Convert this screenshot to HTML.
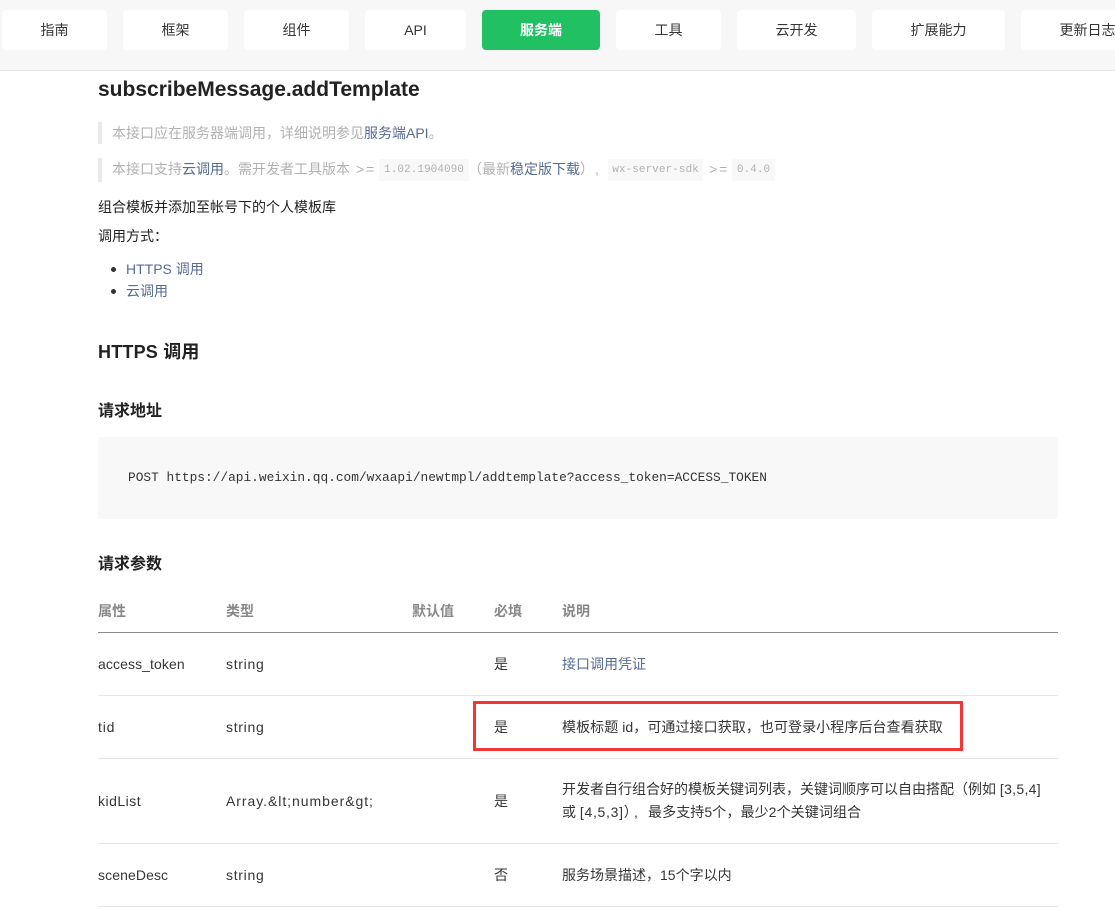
<!DOCTYPE html>
<html lang="zh-CN">
<head>
<meta charset="utf-8">
<title>subscribeMessage.addTemplate</title>
<style>
html,body{margin:0;padding:0;background:#fff}
body{width:1115px;height:910px;overflow:hidden;position:relative;font-family:"Liberation Sans","Noto Sans CJK SC",sans-serif;font-size:14px;color:#353535}
.a{position:absolute;white-space:nowrap;line-height:20px}
.bar{position:absolute;left:0;top:0;width:1115px;height:70px;background:#f7f7f7;border-bottom:1px solid #e7e7e7}
.tab{position:absolute;top:10px;height:40px;line-height:40px;background:#fff;border-radius:4px;text-align:center;color:#353535;font-size:14px;white-space:nowrap}
.tab.on{background:#20c063;color:#fff;font-weight:bold}
.q{position:absolute;left:98px;width:4px;background:#e9e9e9}
.g{color:#b2b2b2}
.l{color:#576b95}
.c{position:absolute;top:159px;height:22px;line-height:22px;box-sizing:border-box;text-align:center;font-family:"Liberation Mono",monospace;font-size:11.1px;background:#f8f8f8;color:#b2b2b2;border-radius:2px;white-space:nowrap}
.hr{position:absolute;left:98px;width:960px;height:1px;background:#e7e7e7}
.h{font-weight:bold;color:#222}
.th{font-weight:bold;color:#888;font-size:14px}
</style>
</head>
<body>
<div class="bar"></div>
<div class="tab" style="left:2px;width:105px">指南</div>
<div class="tab" style="left:123px;width:105px">框架</div>
<div class="tab" style="left:244px;width:105px">组件</div>
<div class="tab" style="left:365px;width:101px">API</div>
<div class="tab on" style="left:482px;width:118px">服务端</div>
<div class="tab" style="left:616px;width:105px">工具</div>
<div class="tab" style="left:737px;width:119px">云开发</div>
<div class="tab" style="left:872px;width:133px">扩展能力</div>
<div class="tab" style="left:1021px;width:133px">更新日志</div>

<div class="a h" style="left:98px;top:76px;font-size:21px;line-height:28px">subscribeMessage.addTemplate</div>

<div class="q" style="top:122px;height:22px"></div>
<div class="a g" style="left:112px;top:123px">本接口应在服务器端调用，详细说明参见<span class="l">服务端API</span>。</div>
<div class="q" style="top:158px;height:24px"></div>
<div class="a g" style="left:112px;top:159px">本接口支持<span class="l">云调用</span>。需开发者工具版本</div>
<div class="a g" style="left:356px;top:159px;letter-spacing:2px">&gt;=</div>
<div class="c" style="left:379px;width:90px">1.02.1904090</div>
<div class="a g" style="left:468px;top:159px">（最新<span class="l">稳定版下载</span>）</div>
<div class="a g" style="left:595px;top:159px">,</div>
<div class="c" style="left:608px;width:95px">wx-server-sdk</div>
<div class="a g" style="left:709px;top:159px;letter-spacing:2px">&gt;=</div>
<div class="c" style="left:732px;width:43px">0.4.0</div>

<div class="a" style="left:98px;top:197px;color:#222">组合模板并添加至帐号下的个人模板库</div>
<div class="a" style="left:98px;top:226px;color:#222">调用方式：</div>
<div class="a" style="left:111px;top:267px;width:5px;height:5px;border-radius:50%;background:#333"></div>
<div class="a l" style="left:126px;top:259px">HTTPS 调用</div>
<div class="a" style="left:111px;top:289px;width:5px;height:5px;border-radius:50%;background:#333"></div>
<div class="a l" style="left:126px;top:281px">云调用</div>

<div class="a h" style="left:98px;top:340px;font-size:18px;line-height:24px;letter-spacing:.2px">HTTPS 调用</div>
<div class="a h" style="left:98px;top:401px;font-size:16px;line-height:22px">请求地址</div>

<div style="position:absolute;left:98px;top:437px;width:960px;height:82px;background:#f8f8f8;border-radius:3px"></div>
<div class="a" style="left:128px;top:468px;font-family:'Liberation Mono',monospace;font-size:12.83px;color:#333">POST https://api.weixin.qq.com/wxaapi/newtmpl/addtemplate?access_token=ACCESS_TOKEN</div>

<div class="a h" style="left:98px;top:554px;font-size:16px;line-height:22px">请求参数</div>

<div class="a th" style="left:98px;top:601px">属性</div>
<div class="a th" style="left:226px;top:601px">类型</div>
<div class="a th" style="left:412px;top:601px">默认值</div>
<div class="a th" style="left:494px;top:601px">必填</div>
<div class="a th" style="left:562px;top:601px">说明</div>
<div class="hr" style="top:632px;background:#8a8a8a"></div>

<div class="a" style="left:98px;top:654px;letter-spacing:.1px">access_token</div>
<div class="a" style="left:226px;top:654px;letter-spacing:.7px">string</div>
<div class="a" style="left:494px;top:654px">是</div>
<div class="a l" style="left:562px;top:654px">接口调用凭证</div>
<div class="hr" style="top:695px"></div>

<div class="a" style="left:98px;top:717px;letter-spacing:.8px">tid</div>
<div class="a" style="left:226px;top:717px;letter-spacing:.7px">string</div>
<div class="a" style="left:494px;top:717px">是</div>
<div class="a" style="left:562px;top:717px;letter-spacing:.07px">模板标题 id，可通过接口获取，也可登录小程序后台查看获取</div>
<div class="hr" style="top:758px"></div>

<div class="a" style="left:98px;top:791px;letter-spacing:.5px">kidList</div>
<div class="a" style="left:226px;top:791px;letter-spacing:.95px">Array.&amp;lt;number&amp;gt;</div>
<div class="a" style="left:494px;top:791px">是</div>
<div class="a" style="left:562px;top:779px">开发者自行组合好的模板关键词列表，关键词顺序可以自由搭配（例如 <span style="letter-spacing:.3px">[3,5,4]</span></div>
<div class="a" style="left:562px;top:802px">或 <span style="letter-spacing:.7px">[4,5,3]</span>）</div>
<div class="a" style="left:634px;top:802px">,</div>
<div class="a" style="left:648px;top:802px;letter-spacing:.1px">最多支持5个，最少2个关键词组合</div>
<div class="hr" style="top:843px"></div>

<div class="a" style="left:98px;top:865px;letter-spacing:.1px">sceneDesc</div>
<div class="a" style="left:226px;top:865px;letter-spacing:.7px">string</div>
<div class="a" style="left:494px;top:865px">否</div>
<div class="a" style="left:562px;top:865px">服务场景描述，15个字以内</div>
<div class="hr" style="top:906px"></div>

<div style="position:absolute;left:473px;top:701px;width:484px;height:44px;border:3px solid #f23535"></div>
</body>
</html>
